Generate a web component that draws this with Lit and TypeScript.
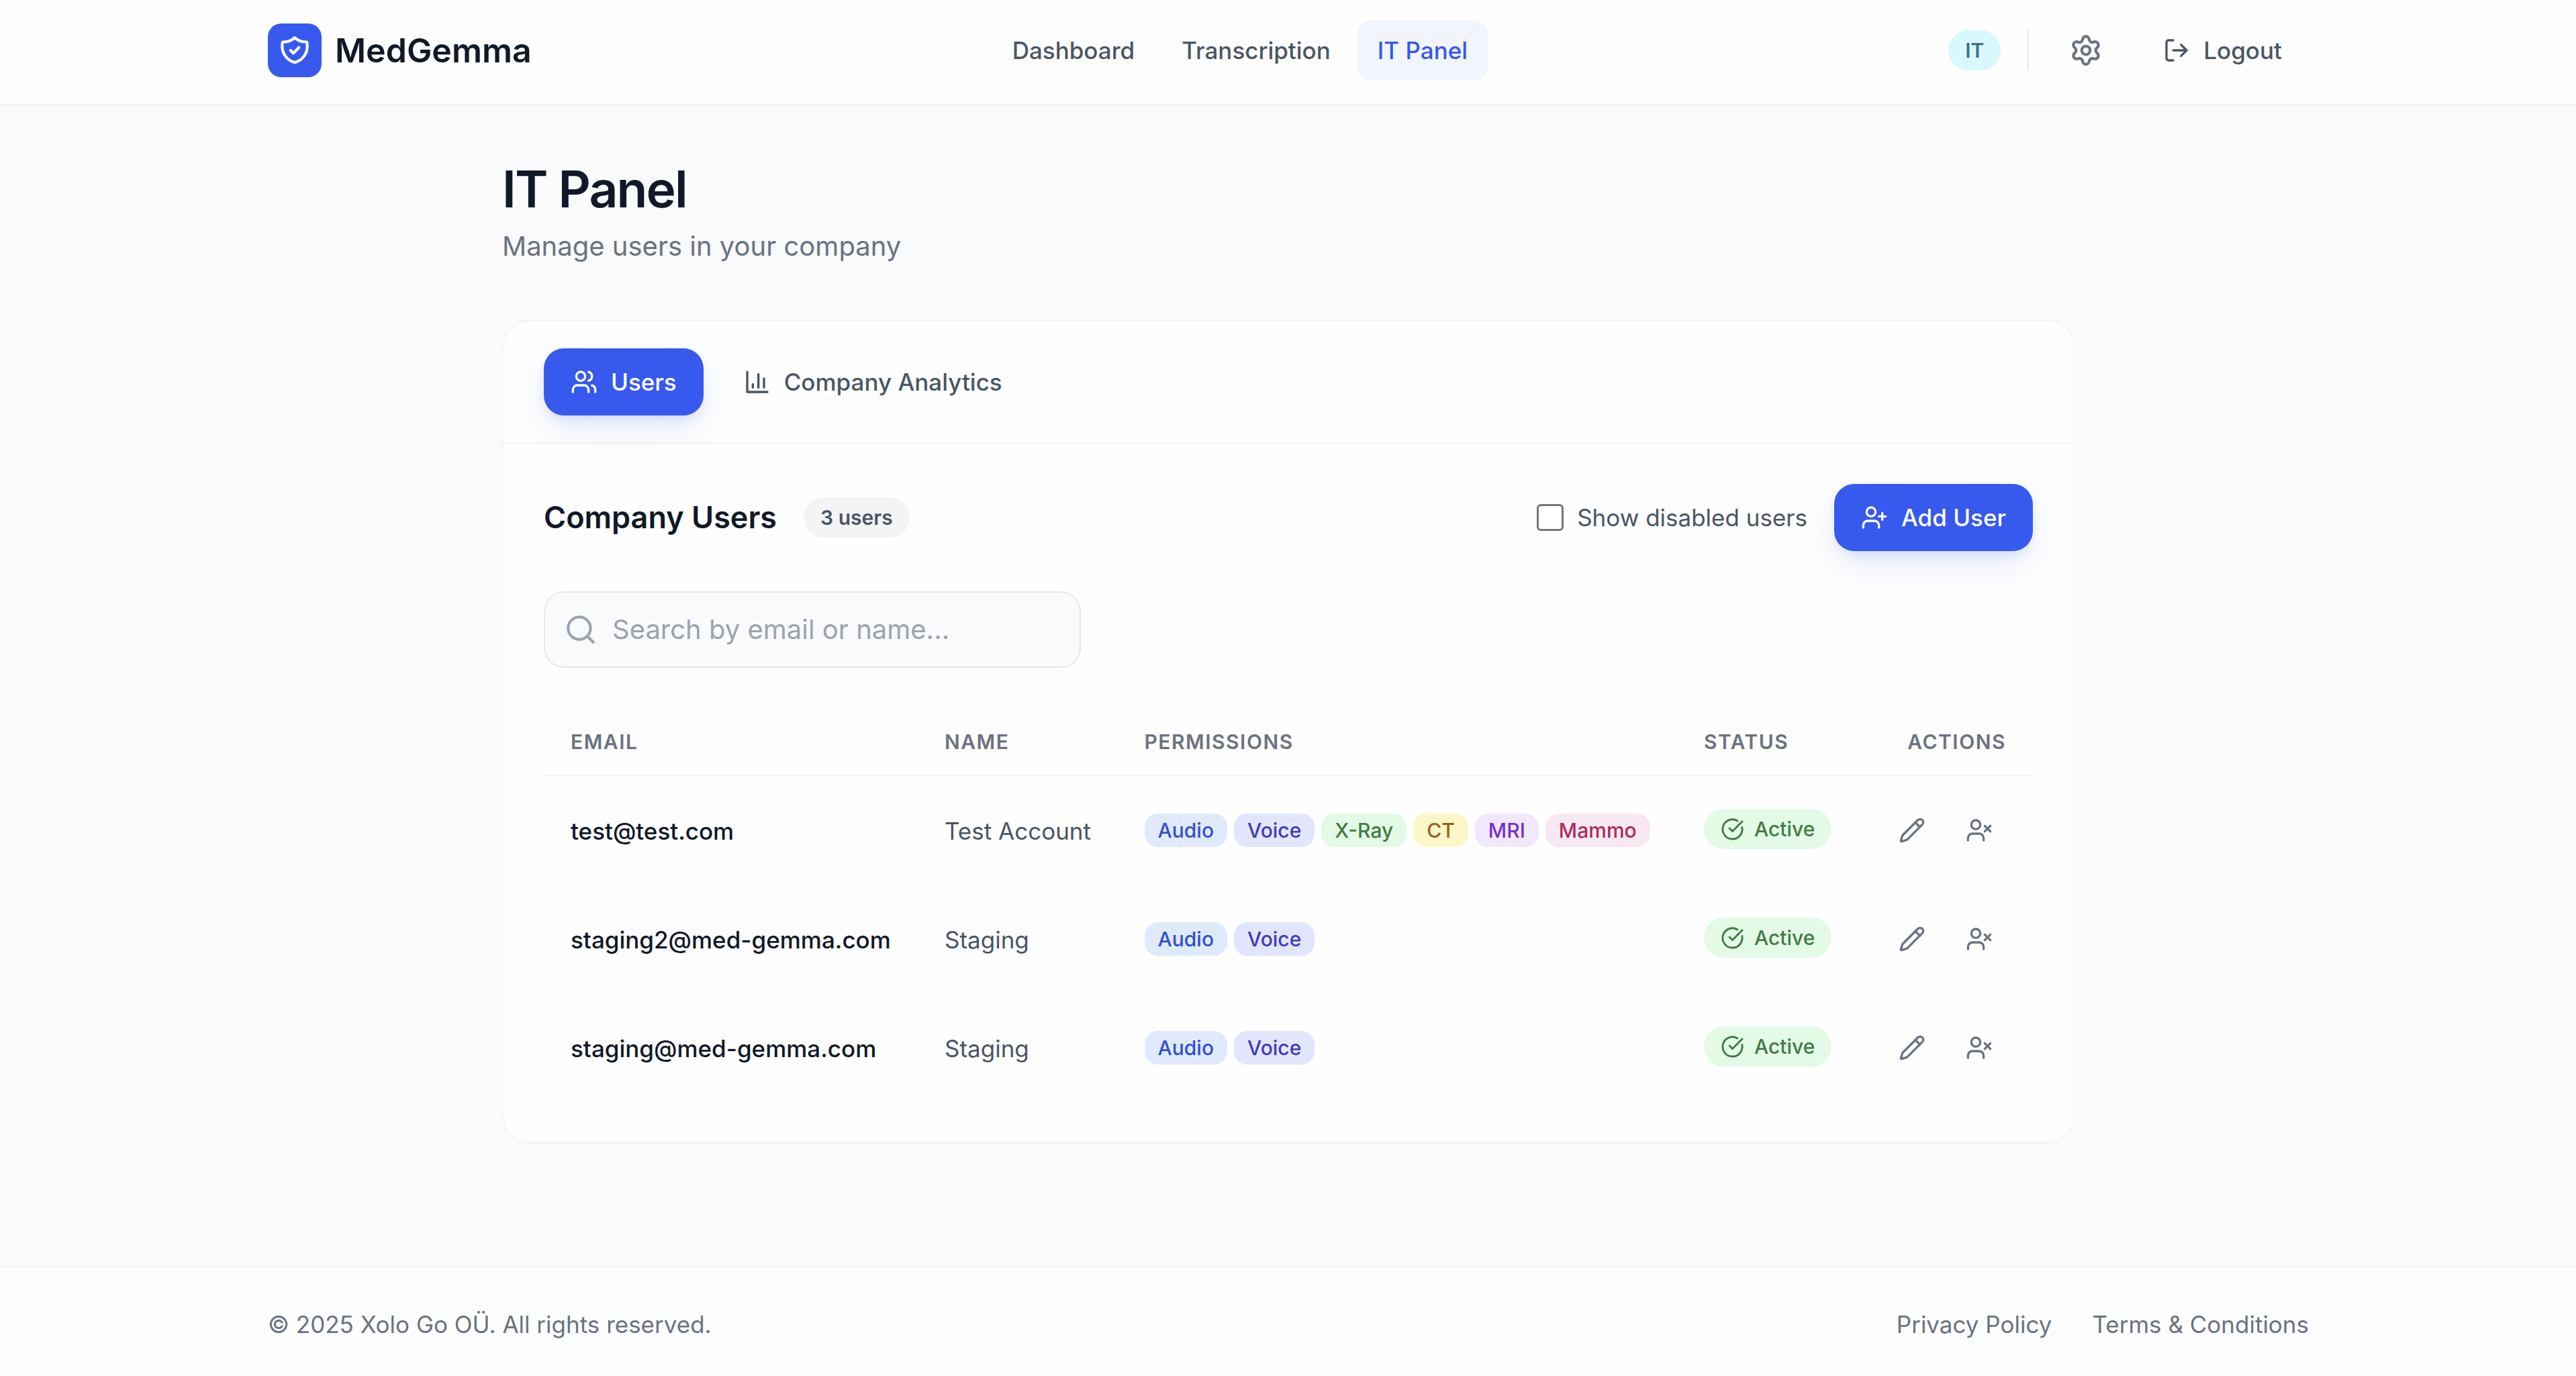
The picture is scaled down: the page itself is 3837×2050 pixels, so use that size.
import { LitElement, html, css, svg } from "lit";
import { customElement, property } from "lit/decorators.js";
import { classMap } from "lit/directives/class-map.js";

const icons: Record<string, unknown> = {
  shield: svg`<path d="M9 12l2 2 4-4m5.618-4.016A11.955 11.955 0 0112 2.944a11.955 11.955 0 01-8.618 3.04A12.02 12.02 0 003 9c0 5.591 3.824 10.29 9 11.622 5.176-1.332 9-6.03 9-11.622 0-1.042-.133-2.052-.382-3.016z" />`,
  settings: svg`<path d="M9.671 4.136a2.34 2.34 0 0 1 4.659 0 2.34 2.34 0 0 0 3.319 1.915 2.34 2.34 0 0 1 2.33 4.033 2.34 2.34 0 0 0 0 3.831 2.34 2.34 0 0 1-2.33 4.033 2.34 2.34 0 0 0-3.319 1.915 2.34 2.34 0 0 1-4.659 0 2.34 2.34 0 0 0-3.32-1.915 2.34 2.34 0 0 1-2.33-4.033 2.34 2.34 0 0 0 0-3.831A2.34 2.34 0 0 1 6.35 6.051a2.34 2.34 0 0 0 3.319-1.915" /><circle cx="12" cy="12" r="3" />`,
  logout: svg`<path d="m16 17 5-5-5-5" /><path d="M21 12H9" /><path d="M9 21H5a2 2 0 0 1-2-2V5a2 2 0 0 1 2-2h4" />`,
  users: svg`<path d="M16 21v-2a4 4 0 0 0-4-4H6a4 4 0 0 0-4 4v2" /><path d="M16 3.128a4 4 0 0 1 0 7.744" /><path d="M22 21v-2a4 4 0 0 0-3-3.87" /><circle cx="9" cy="7" r="4" />`,
  chart: svg`<path d="M3 3v18h18" /><path d="M18 17V9" /><path d="M13 17V5" /><path d="M8 17v-3" />`,
  userPlus: svg`<path d="M16 21v-2a4 4 0 0 0-4-4H6a4 4 0 0 0-4 4v2" /><circle cx="9" cy="7" r="4" /><path d="M19 8v6" /><path d="M22 11h-6" />`,
  userX: svg`<path d="M16 21v-2a4 4 0 0 0-4-4H6a4 4 0 0 0-4 4v2" /><circle cx="9" cy="7" r="4" /><path d="m17 8 5 5" /><path d="m22 8-5 5" />`,
  search: svg`<path d="m21 21-4.34-4.34" /><circle cx="11" cy="11" r="8" />`,
  check: svg`<path d="M21.801 10A10 10 0 1 1 17 3.335" /><path d="m9 11 3 3L22 4" />`,
  pencil: svg`<path d="M21.174 6.812a1 1 0 0 0-3.986-3.987L3.842 16.174a2 2 0 0 0-.5.83l-1.321 4.352a.5.5 0 0 0 .623.622l4.353-1.32a2 2 0 0 0 .83-.497z" /><path d="m15 5 4 4" />`,
};

@customElement("app-icon")
export class AppIcon extends LitElement {
  @property() name = "";

  static styles = css`
    :host {
      display: block;
      width: 40px;
      height: 40px;
      flex: none;
    }
    svg {
      display: block;
      width: 100%;
      height: 100%;
      fill: none;
      stroke: currentColor;
      stroke-width: 2;
      stroke-linecap: round;
      stroke-linejoin: round;
    }
  `;

  render() {
    return html`<svg viewBox="0 0 24 24">${icons[this.name]}</svg>`;
  }
}

const nav = ["Dashboard", "Transcription", "IT Panel"];

const users = [
  {
    email: "test@test.com",
    name: "Test Account",
    permissions: ["Audio", "Voice", "X-Ray", "CT", "MRI", "Mammo"],
  },
  {
    email: "staging2@med-gemma.com",
    name: "Staging",
    permissions: ["Audio", "Voice"],
  },
  {
    email: "staging@med-gemma.com",
    name: "Staging",
    permissions: ["Audio", "Voice"],
  },
];

@customElement("app-root")
export class AppRoot extends LitElement {
  @property() page = "IT Panel";

  static styles = css`
    :host {
      display: flex;
      flex-direction: column;
      height: 2050px;
      overflow: hidden;
      background: #f9fafc;
      color: #111827;
      font-family: Inter, "Liberation Sans", sans-serif;
      font-size: 35px;
      line-height: 50px;
      white-space: nowrap;
    }
    * {
      box-sizing: border-box;
    }
    h1,
    h2,
    p {
      margin: 0;
    }
    button,
    input {
      font: inherit;
      color: inherit;
      border: 0;
      background: none;
      padding: 0;
      margin: 0;
    }

    header {
      flex: none;
      display: flex;
      justify-content: space-between;
      align-items: center;
      height: 157px;
      padding: 0 398px 5px 399px;
      background: #fefefe;
      border-bottom: 2px solid #f1f3f5;
    }
    .brand {
      display: flex;
      align-items: center;
      gap: 20px;
      font-size: 50px;
      font-weight: 600;
      line-height: 70px;
    }
    .logo {
      display: grid;
      place-items: center;
      width: 80px;
      height: 80px;
      border-radius: 20px;
      background: #3759ed;
      color: #fff;
    }
    .large {
      width: 50px;
      height: 50px;
    }
    nav {
      display: flex;
      gap: 10px;
    }
    nav a {
      padding: 20px 30px;
      border-radius: 20px;
      font-weight: 500;
      color: #4b5563;
    }
    nav a.active {
      background: #f0f5fe;
      color: #3759ed;
    }
    .account {
      display: flex;
      align-items: center;
      gap: 20px;
    }
    .role {
      padding: 10px 25px;
      border-radius: 30px;
      background: #d9f8fc;
      color: #3b728f;
      font-size: 30px;
      line-height: 40px;
      font-weight: 600;
    }
    .divider {
      width: 2px;
      height: 60px;
      margin: 0 10px 0 20px;
      background: #e5e7eb;
    }
    .settings {
      padding: 30px;
      color: #6b7280;
    }
    .logout {
      display: flex;
      align-items: center;
      gap: 20px;
      padding: 20px 40px;
      font-weight: 500;
      color: #4b5563;
    }

    main {
      flex: 1;
      padding: 80px 747px 0 748px;
    }
    h1 {
      font-size: 75px;
      line-height: 90px;
      font-weight: 600;
      letter-spacing: -0.025em;
    }
    .subtitle {
      margin-top: 10px;
      font-size: 40px;
      line-height: 60px;
      color: #6b7280;
    }
    .card {
      margin-top: 80px;
      border: 2px solid #f3f4f6;
      border-radius: 40px;
      background: #fefefe;
    }
    .tabs {
      display: flex;
      gap: 20px;
      padding: 40px 60px;
      border-bottom: 2px solid #f3f4f6;
    }
    .tab,
    .primary {
      display: flex;
      align-items: center;
      gap: 20px;
      height: 100px;
      padding: 0 40px;
      border-radius: 30px;
      font-weight: 500;
      color: #4b5563;
    }
    .primary {
      background: #3759ed;
      color: #fff;
      box-shadow: 0 20px 50px -6px rgba(55, 89, 237, 0.15),
        0 8px 20px -8px rgba(55, 89, 237, 0.2);
    }
    .content {
      padding: 60px;
    }
    .toolbar {
      display: flex;
      align-items: center;
      gap: 40px;
    }
    h2 {
      font-size: 45px;
      line-height: 70px;
      font-weight: 600;
    }
    .count {
      padding: 10px 25px;
      border-radius: 30px;
      background: #f3f4f6;
      color: #4b5563;
      font-size: 30px;
      line-height: 40px;
      font-weight: 600;
    }
    .toggle {
      display: flex;
      align-items: center;
      gap: 20px;
      margin-left: auto;
      color: #4b5563;
    }
    .toggle input {
      appearance: none;
      width: 40px;
      height: 40px;
      border: 3px solid #767676;
      border-radius: 6px;
      background: #fff;
    }
    .search {
      display: flex;
      align-items: center;
      gap: 22px;
      width: 800px;
      height: 114px;
      margin: 60px 0;
      padding: 0 30px 0 28px;
      border: 2px solid #e5e7eb;
      border-radius: 30px;
      background: #f9fafc;
      color: #9ca3af;
      font-size: 40px;
      line-height: 60px;
    }
    .search input {
      flex: 1;
      min-width: 0;
      outline: none;
    }
    .search input::placeholder {
      color: #9ca3af;
      opacity: 1;
    }

    .row {
      display: grid;
      grid-template-columns: 557px 297.5px 833.5px 270px 260px;
      align-items: center;
      height: 162px;
      border-bottom: 2px solid #f9fafb;
    }
    .row:last-child {
      height: 160px;
      border-bottom: 0;
    }
    .row > * {
      padding: 0 40px;
    }
    .head {
      height: 102px;
      border-color: #f3f4f6;
      color: #6b7280;
      font-size: 30px;
      line-height: 40px;
      font-weight: 600;
      letter-spacing: 0.05em;
    }
    .head :last-child {
      text-align: right;
    }
    .row .email {
      padding-top: 2px;
      font-weight: 500;
    }
    .row .name {
      padding-top: 2px;
      color: #4b5563;
    }
    .permissions {
      display: flex;
      gap: 10px;
    }
    .tag {
      padding: 5px 20px;
      border-radius: 20px;
      font-size: 30px;
      line-height: 40px;
      font-weight: 500;
    }
    .audio {
      background: #dfeafd;
      color: #3350cf;
    }
    .voice {
      background: #e1e6fd;
      color: #4338bf;
    }
    .x-ray {
      background: #e2fae6;
      color: #447a45;
    }
    .ct {
      background: #fbf7c7;
      color: #946221;
    }
    .mri {
      background: #f1e8fd;
      color: #752fc8;
    }
    .mammo {
      background: #f8e8f2;
      color: #ac2a59;
    }
    .row .status {
      display: flex;
      padding-bottom: 4px;
    }
    .active-badge {
      display: flex;
      align-items: center;
      gap: 15px;
      padding: 10px 25px;
      border-radius: 30px;
      background: #e2fae6;
      color: #447a45;
      font-size: 30px;
      line-height: 40px;
      font-weight: 500;
    }
    .small {
      width: 35px;
      height: 35px;
    }
    .actions {
      display: flex;
      justify-content: flex-end;
      gap: 20px;
      color: #6b7280;
    }
    .actions button {
      padding: 20px;
    }

    footer {
      flex: none;
      display: flex;
      gap: 60px;
      height: 164px;
      padding: 60px 398px 0 399px;
      border-top: 2px solid #f3f4f6;
      background: #fcfefd;
      color: #6b7280;
    }
    footer p {
      margin-right: auto;
    }
  `;

  renderUser(user: (typeof users)[number]) {
    return html`
      <div class="row">
        <div class="email">${user.email}</div>
        <div class="name">${user.name}</div>
        <div class="permissions">
          ${user.permissions.map(
            (p) => html`<span class="tag ${p.toLowerCase()}">${p}</span>`
          )}
        </div>
        <div class="status">
          <span class="active-badge">
            <app-icon class="small" name="check"></app-icon>Active
          </span>
        </div>
        <div class="actions">
          <button><app-icon name="pencil"></app-icon></button>
          <button><app-icon name="userX"></app-icon></button>
        </div>
      </div>
    `;
  }

  render() {
    return html`
      <header>
        <div class="brand">
          <div class="logo"><app-icon class="large" name="shield"></app-icon></div>
          <span>MedGemma</span>
        </div>
        <nav>
          ${nav.map(
            (item) =>
              html`<a class=${classMap({ active: item === this.page })}>${item}</a>`
          )}
        </nav>
        <div class="account">
          <span class="role">IT</span>
          <span class="divider"></span>
          <button class="settings">
            <app-icon class="large" name="settings"></app-icon>
          </button>
          <button class="logout"><app-icon name="logout"></app-icon>Logout</button>
        </div>
      </header>

      <main>
        <h1>IT Panel</h1>
        <p class="subtitle">Manage users in your company</p>

        <section class="card">
          <div class="tabs">
            <button class="primary"><app-icon name="users"></app-icon>Users</button>
            <button class="tab">
              <app-icon name="chart"></app-icon>Company Analytics
            </button>
          </div>

          <div class="content">
            <div class="toolbar">
              <h2>Company Users</h2>
              <span class="count">${users.length} users</span>
              <label class="toggle"><input type="checkbox" />Show disabled users</label>
              <button class="primary">
                <app-icon name="userPlus"></app-icon>Add User
              </button>
            </div>

            <div class="search">
              <app-icon class="large" name="search"></app-icon>
              <input placeholder="Search by email or name..." />
            </div>

            <div class="table">
              <div class="row head">
                <span>EMAIL</span>
                <span>NAME</span>
                <span>PERMISSIONS</span>
                <span>STATUS</span>
                <span>ACTIONS</span>
              </div>
              ${users.map((user) => this.renderUser(user))}
            </div>
          </div>
        </section>
      </main>

      <footer>
        <p>© 2025 Xolo Go OÜ. All rights reserved.</p>
        <a>Privacy Policy</a>
        <a>Terms &amp; Conditions</a>
      </footer>
    `;
  }
}
